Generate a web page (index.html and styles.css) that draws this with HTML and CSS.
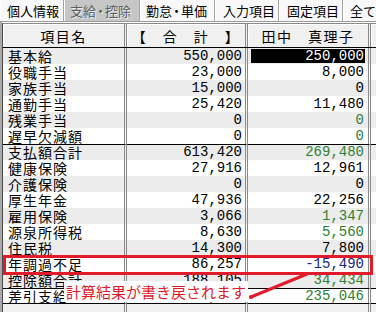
FILE: index.html
```html
<!DOCTYPE html>
<html lang="ja">
<head>
<meta charset="utf-8">
<title>給与明細</title>
<link rel="stylesheet" href="styles.css">
</head>
<body>
<div class="screen">
  <div class="tabs">
    <div class="tab t1">個人情報</div>
    <div class="tab t2 on">支給<span class="nd">・</span>控除</div>
    <div class="tab t3">勤怠<span class="nd">・</span>単価</div>
    <div class="tab t4">入力項目</div>
    <div class="tab t5">固定項目</div>
    <div class="tab t6">全て</div>
  </div>
  <div class="grid">
    <div class="table">
      <div class="row head">
        <div class="c c1">項目名</div>
        <div class="c c2">【　合　計　】</div>
        <div class="c c3">田中　真理子</div>
        <div class="c c4"></div>
      </div>
      <div class="row g"><div class="c c1">基本給</div><div class="c c2">550,000</div><div class="c c3 s"><span class="selv">250,000</span></div><div class="c c4"></div></div>
      <div class="row"><div class="c c1">役職手当</div><div class="c c2">23,000</div><div class="c c3">8,000</div><div class="c c4"></div></div>
      <div class="row g"><div class="c c1">家族手当</div><div class="c c2">15,000</div><div class="c c3">0</div><div class="c c4"></div></div>
      <div class="row"><div class="c c1">通勤手当</div><div class="c c2">25,420</div><div class="c c3">11,480</div><div class="c c4"></div></div>
      <div class="row g"><div class="c c1">残業手当</div><div class="c c2">0</div><div class="c c3 gr">0</div><div class="c c4"></div></div>
      <div class="row"><div class="c c1">遅早欠減額</div><div class="c c2">0</div><div class="c c3 gr">0</div><div class="c c4"></div></div>
      <div class="row g top"><div class="c c1">支払額合計</div><div class="c c2">613,420</div><div class="c c3 gr">269,480</div><div class="c c4"></div></div>
      <div class="row"><div class="c c1">健康保険</div><div class="c c2">27,916</div><div class="c c3">12,961</div><div class="c c4"></div></div>
      <div class="row g"><div class="c c1">介護保険</div><div class="c c2">0</div><div class="c c3">0</div><div class="c c4"></div></div>
      <div class="row"><div class="c c1">厚生年金</div><div class="c c2">47,936</div><div class="c c3">22,256</div><div class="c c4"></div></div>
      <div class="row g"><div class="c c1">雇用保険</div><div class="c c2">3,066</div><div class="c c3 gr">1,347</div><div class="c c4"></div></div>
      <div class="row"><div class="c c1">源泉所得税</div><div class="c c2">8,630</div><div class="c c3 gr">5,560</div><div class="c c4"></div></div>
      <div class="row g"><div class="c c1">住民税</div><div class="c c2">14,300</div><div class="c c3">7,800</div><div class="c c4"></div></div>
      <div class="row"><div class="c c1">年調過不足</div><div class="c c2">86,257</div><div class="c c3 nv">-15,490</div><div class="c c4"></div></div>
      <div class="row g"><div class="c c1">控除額合計</div><div class="c c2">188,105</div><div class="c c3 gr">34,434</div><div class="c c4"></div></div>
      <div class="row top bot"><div class="c c1">差引支給</div><div class="c c2">425,315</div><div class="c c3 gr">235,046</div><div class="c c4"></div></div>
      <div class="row fill"><div class="c c1"></div><div class="c c2"></div><div class="c c3"></div><div class="c c4"></div></div>
    </div>
  </div>

  <div class="redbox"></div>
  <div class="note">計算結果が書き戻されます</div>
  <svg class="arrow" width="376" height="312" viewBox="0 0 376 312">
    <line x1="251" y1="297" x2="307" y2="274" stroke="#e11b2a" stroke-width="3" stroke-linecap="round"/>
    <circle cx="251" cy="297" r="2" fill="#e11b2a"/>
  </svg>
</div>
</body>
</html>
```
FILE: styles.css
```css
html, body {
  margin: 0;
  padding: 0;
  background: #f0f0f0;
}
body {
  width: 376px;
  height: 312px;
  overflow: hidden;
  font-family: "Noto Sans CJK JP", "Noto Sans", sans-serif;
  color: #000;
}
.screen {
  position: relative;
  width: 376px;
  height: 312px;
  overflow: hidden;
  display: flex;
  flex-direction: column;
  background: #ffffff;
}

/* tabs */
.tabs {
  display: flex;
  height: 22px;
  box-sizing: border-box;
  border-bottom: 1px solid #9a9a9a;
  background: #f8f8f8;
  font-size: 13px;
  white-space: nowrap;
  flex: none;
}
.tab {
  box-sizing: border-box;
  flex: none;
  height: 21px;
  padding-top: 1px;
  line-height: 19px;
  border-right: 1px solid #a4a4a4;
  box-shadow: inset 1px 0 0 #ffffff;
}
.nd {
  margin: 0 -2px;
}
.t1 { width: 64px; padding-left: 7px; }
.t2 { width: 76px; padding-left: 6px; }
.t3 { width: 75px; padding-left: 6px; }
.t4 { width: 64px; padding-left: 8px; }
.t5 { width: 64px; padding-left: 8px; }
.t6 { flex: 1; padding-left: 7px; border-right: 0; }
.on {
  background: #c6c6c6;
  color: #5a5a5a;
  text-shadow: 1px 1px 0 #eeeeee;
}

/* grid */
.grid {
  flex: 1;
  border-left: 2px solid #a9a9a9;
  padding-top: 1px;
  display: flex;
  flex-direction: column;
}
.table {
  flex: 1;
  border-left: 1px solid #4a4a4a;
  background: #f0f0f0;
  display: flex;
  flex-direction: column;
}
.row {
  display: flex;
  height: 16px;
  flex: none;
  background: #ffffff;
}
.row.g { background: #ececec; }
.c {
  box-sizing: border-box;
  height: 100%;
  border-right: 3px double #8a8a8a;
  line-height: 16px;
  white-space: nowrap;
}
.c1 {
  width: 124px;
  padding-left: 5px;
  font-size: 14px;
  letter-spacing: 1px;
}
.c2, .c3 {
  text-align: right;
  font-family: "Liberation Mono", "DejaVu Sans Mono", monospace;
  font-size: 14px;
}
.c2 { width: 121px; padding-right: 3px; }
.c3 { width: 123px; padding-right: 4px; }
.c4 { flex: 1; border-right: 0; }

.c3.s { padding-right: 0; }
.selv {
  display: block;
  margin: 1px 3px;
  height: 14px;
  line-height: 14px;
  padding-right: 1px;
  background: #000;
  color: #fff;
}
.gr { color: #2f7f31; }
.nv { color: #1b2580; }

.head {
  height: 25px;
  box-sizing: border-box;
  border-top: 1px solid #8a8a8a;
  border-bottom: 1px solid #000;
  background: #f0f0f0;
}
.head .c {
  padding: 2px 0 0 0;
  line-height: 21px;
  text-align: center;
  font-family: "Noto Sans CJK JP", "Noto Sans", sans-serif;
  font-size: 14px;
  letter-spacing: 1.5px;
  box-shadow: inset 1px 1px 0 #ffffff;
}
.top .c {
  border-top: 1px solid #000;
  line-height: 15px;
}
.bot .c {
  border-bottom: 1px solid #000;
  line-height: 14px;
}
.fill {
  flex: 1;
  background: #f0f0f0;
}

/* overlays */
.redbox {
  position: absolute;
  left: 3px;
  top: 255px;
  width: 370px;
  height: 20px;
  box-sizing: border-box;
  border: 3px solid #e11b2a;
}
.note {
  position: absolute;
  left: 64px;
  top: 281px;
  width: 184px;
  height: 21px;
  box-sizing: border-box;
  padding-left: 2px;
  background: #ffffff;
  color: #e11b2a;
  font-size: 15px;
  line-height: 21px;
  white-space: nowrap;
}
.arrow {
  position: absolute;
  left: 0;
  top: 0;
}
```
